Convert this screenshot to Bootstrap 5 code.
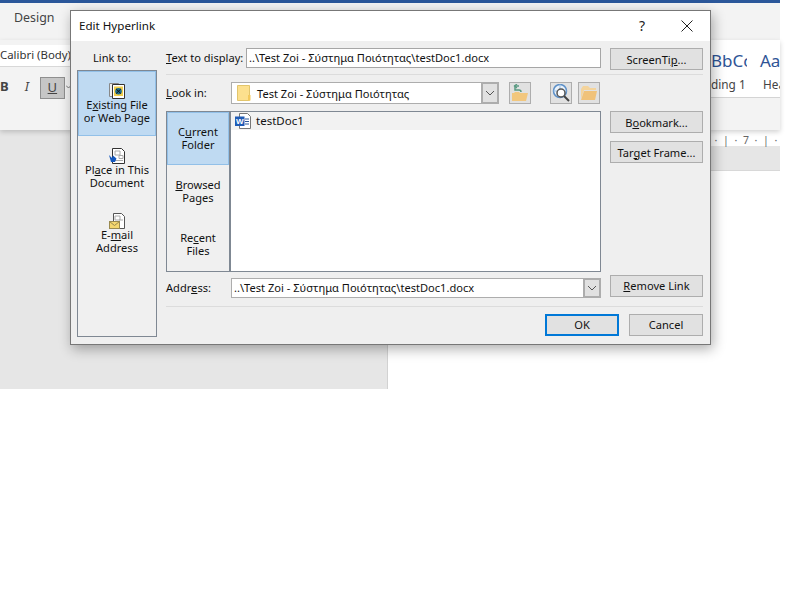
<!DOCTYPE html>
<html lang="en">
<head>
<meta charset="UTF-8">
<title>Edit Hyperlink</title>
<link href="https://cdn.jsdelivr.net/npm/bootstrap@5.3.2/dist/css/bootstrap.min.css" rel="stylesheet">
<style>
html, body { margin: 0; background: #fff; }
body { width: 795px; height: 598px; overflow: hidden; font-family: "Noto Sans", "Open Sans", sans-serif; font-size: 11.1px; color: #111; line-height: 13px; }
.word-win { position: relative; width: 795px; height: 598px; }
.word-top { height: 3px; width: 780px; background: #2b579a; }
.word-tabs { height: 37px; width: 780px; background: #f3f3f3; padding: 8px 0 0 14px; font-size: 12.4px; color: #444; line-height: 14px; }
.word-ribbon { width: 780px; height: 90px; background: #f3f3f3; box-shadow: 0 2px 5px rgba(0,0,0,.18); position: relative; z-index: 1; }
.ribbon-left { width: 70px; overflow: hidden; }
.font-box { height: 22px; margin-top: 5px; background: #fff; padding-top: 3px; white-space: nowrap; font-size: 11.4px; color: #333; border-bottom: 1px solid #d8d8d8; }
.fmt-row { padding-top: 13px; height: 40px; font-size: 13px; color: #444; }
.fmt-i { margin-left: 16px; margin-right: 11px; }
.fmt-u { background: #c6c6c6; border: 1px solid #8f8f8f; width: 25px; height: 22px; margin-top: -3px; text-align: center; line-height: 19px; flex: none; }
.fmt-chev { flex: none; margin: 5px 0 0 1px; }
.ribbon-right { margin-left: auto; width: 69px; background: #fff; height: 58px; border-bottom: 1px solid #d4d4d4; padding-top: 11px; overflow: hidden; white-space: nowrap; }
.style-first { width: 49px; overflow: hidden; flex: none; }
.style-big { font-size: 17px; color: #2f5496; line-height: 20px; }
.style-big-clip { width: 36px; overflow: hidden; }
.style-names { font-size: 11.8px; color: #444; margin-top: 6px; line-height: 14px; }
.word-doc { width: 780px; height: 259px; }
.doc-left { width: 388px; flex: none; background: #e6e6e6; border-right: 1px solid #d2d2d2; }
.doc-right { flex: 1; min-width: 0; background: #fff; }
.ruler { height: 16px; padding: 4px 0 0 323px; font-size: 10.5px; line-height: 12px; color: #666; }
.ruler span { width: 10px; text-align: center; flex: none; }
.ruler-band { height: 25px; background: #e6e6e6; border-bottom: 1px solid #d8d8d8; }

.hl-dialog { position: absolute; left: 70px; top: 10px; width: 641px; height: 335px; background: #efefef; border: 1px solid #777; box-shadow: 2px 4px 12px rgba(0,0,0,.32); z-index: 2; }
.hl-title { height: 30px; background: #fff; padding: 8px 0 0 8px; font-size: 11.6px; line-height: 13px; }
.title-help { position: absolute; top: 6px; left: 568px; font-size: 14px; line-height: 18px; color: #222; }
.title-close { position: absolute; top: 9px; left: 610px; }
.hl-body { padding: 0 7px 0 6px; }
.side-col { width: 80px; margin-right: 9px; }
.side-label { height: 19px; padding: 10px 10px 0 0; box-sizing: content-box; text-align: center; line-height: 13px; }
.side-bar { height: 267px; border: 1px solid #7f8893; background: #f0f0f0; }
.side-item { height: 65px; text-align: center; padding-top: 12px; }
.side-item svg { display: block; margin: 0 auto -1px; }
.side-item.on { background: #bfdaf2; border: 1px solid #92c0e8; padding-top: 11px; }
.side-last { height: auto; padding-top: 12px; }
.main-col { width: 537px; }
.form-row-hl { display: flex; }
.row-text { padding-top: 7px; height: 33px; }
.row-look { padding-top: 7px; height: 36px; }
.row-addr { height: 34px; }
.left-part { width: 435px; display: flex; }
.left-addr { padding-top: 6px; }
.lbl { width: 80px; padding-top: 3px; white-space: nowrap; }
.lbl-look { padding-top: 4px; }
.lbl-addr { width: 65px; }
.hl-input { flex: 1; height: 20px; background: #fff; border: 1px solid #a6a6a6; padding: 2px 0 0 2px; white-space: nowrap; overflow: hidden; }
.hl-btn { display: block; width: 93px; height: 22px; background: #e1e1e1; border: 1px solid #adadad; text-align: center; line-height: 19px; color: #111; padding: 0; font-size: 11.1px; border-radius: 0; }
.hl-btn-next { margin-top: 8px; }
.hl-btn-low { line-height: 18px; }
.right-part { margin-left: 9px; width: 93px; }
.right-addr { padding-top: 3px; }
.hl-sep { height: 1px; background: #dcdcdc; }
.combo { position: relative; width: 268px; height: 22px; background: #fff; border: 1px solid #adadad; padding: 4px 0 0 25px; margin-left: -15px; }
.combo svg.folder { position: absolute; left: 5px; top: 2px; }
.combo-arrow { position: absolute; right: -1px; top: -1px; width: 18px; height: 22px; background: #e1e1e1; border: 2px solid #adadad; display: flex; align-items: center; justify-content: center; }
.combo-addr { margin-left: 0; width: 370px; padding: 2px 0 0 2px; height: 20px; }
.combo-addr .combo-arrow { height: 20px; }
.tool-btn { width: 22px; height: 22px; background: #e1e1e1; border: 1px solid #adadad; display: flex; align-items: center; justify-content: center; }
.tool-first { margin-left: 10px; }
.tool-second { margin-left: 19px; }
.tool-third { margin-left: 6px; }
.browse { width: 435px; height: 161px; border: 1px solid #7f8893; }
.tabs-col { width: 64px; background: #f0f0f0; border-right: 2px solid #7f8893; flex: none; }
.tab-item { height: 53px; text-align: center; padding-top: 13px; }
.tab-item.on { background: #bfdaf2; border: 1px solid #92c0e8; padding-top: 12px; }
.file-list { flex: 1; background: #fff; }
.file-row { height: 18px; background: #f2f2f2; padding: 1px 0 0 4px; display: flex; gap: 5px; font-size: 11.5px; line-height: 16px; }
.file-row svg { flex: none; }
.foot-row { padding-top: 7px; gap: 10px; }
.btn-ok { width: 74px; height: 22px; background: #e1e1e1; border: 2px solid #0078d7; text-align: center; line-height: 16px; padding: 0; font-size: 11.1px; color: #111; border-radius: 0; }
.btn-cancel { width: 74px; }
u { text-underline-offset: 1px; }
</style>
</head>
<body>
<div class="word-win">
  <div class="word-top"></div>
  <div class="word-tabs">Design</div>
  <div class="word-ribbon d-flex">
    <div class="ribbon-left">
      <div class="font-box">Calibri (Body)</div>
      <div class="fmt-row d-flex align-items-start">
        <b>B</b><i class="fmt-i">I</i><div class="fmt-u"><u>U</u></div>
        <svg class="fmt-chev" width="5" height="4" viewBox="0 0 5 4"><path d="M0 .5l2.500 2.500L5 .5" fill="none" stroke="#777"/></svg>
      </div>
    </div>
    <div class="ribbon-right d-flex">
      <div class="style-first">
        <div class="style-big style-big-clip">BbCc</div>
        <div class="style-names">ding 1</div>
      </div>
      <div>
        <div class="style-big">AaI</div>
        <div class="style-names">&nbsp;Hea</div>
      </div>
    </div>
  </div>
  <div class="word-doc d-flex">
    <div class="doc-left"></div>
    <div class="doc-right">
      <div class="ruler d-flex"><span>&middot;</span><span>|</span><span>&middot;</span><span>7</span><span>&middot;</span><span>|</span><span>&middot;</span></div>
      <div class="ruler-band"></div>
    </div>
  </div>

  <div class="hl-dialog">
    <div class="hl-title">Edit Hyperlink</div>
    <div class="title-help">?</div>
    <svg class="title-close" width="12" height="12" viewBox="0 0 12 12"><path d="M.5.5l11 11M11.5.5l-11 11" stroke="#222" fill="none"/></svg>
    <div class="hl-body d-flex">
      <div class="side-col">
        <div class="side-label">Link to:</div>
        <div class="side-bar">
          <div class="side-item on">
            <svg width="16" height="16" viewBox="0 0 16 16"><path d="M.5.500h9v13h-9z" fill="#eee" stroke="#888"/><path d="M3.500 1.500h12v14h-12z" fill="#fff" stroke="#333"/><rect x="5" y="3.500" width="9" height="9.500" fill="#f2cf4a"/><circle cx="9.500" cy="8.200" r="3.300" fill="#1d6f8f"/><path d="M7.200 6l4.600 4.500M11.800 6l-4.600 4.500" stroke="#111"/></svg>
            <div>E<u>x</u>isting File<br>or Web Page</div>
          </div>
          <div class="side-item">
            <svg width="16" height="16" viewBox="0 0 16 16"><path d="M3.500.5h9l3 3v12h-12z" fill="#fff" stroke="#333"/><path d="M6 3h5v4H6zM10 7.500h4v3h-4zM6 12.500h8" fill="none" stroke="#aaa"/><path d="M0 7l3 3 1-2.500 3.500 3L6 14H2z" fill="#1559c0"/></svg>
            <div>Pl<u>a</u>ce in This<br>Document</div>
          </div>
          <div class="side-item side-last">
            <svg width="16" height="16" viewBox="0 0 16 16"><path d="M4.500.5h8l3 3v12h-11z" fill="#fff" stroke="#555"/><path d="M6 3h5v4H6zM10 7h4" fill="none" stroke="#aaa"/><rect x=".5" y="8.500" width="10" height="7" fill="#f5d76e" stroke="#9a8a50"/><path d="M.5 8.500l5 4 5-4" fill="none" stroke="#9a8a50"/></svg>
            <div>E-<u>m</u>ail<br>Address</div>
          </div>
        </div>
      </div>
      <div class="main-col">
        <div class="form-row-hl row-text">
          <div class="left-part"><div class="lbl"><u>T</u>ext to display:</div><div class="hl-input">..\Test Zoi - Σύστημα Ποιότητας\testDoc1.docx</div></div>
          <div class="right-part"><button type="button" class="hl-btn">ScreenTi<u>p</u>...</button></div>
        </div>
        <div class="hl-sep"></div>
        <div class="form-row-hl row-look">
          <div class="left-part">
            <div class="lbl lbl-look"><u>L</u>ook in:</div>
            <div class="combo">
              <svg class="folder" width="14" height="16" viewBox="0 0 14 16"><path d="M.5.500h12v15H.5z" fill="#fce08e" stroke="#e2c56c"/><path d="M11 10h2.500v5.500H11z" fill="#f3c95c"/></svg>
              Test Zoi - Σύστημα Ποιότητας
              <div class="combo-arrow"><svg width="10" height="6" viewBox="0 0 10 6"><path d="M1 1l4 4 4-4" fill="none" stroke="#555"/></svg></div>
            </div>
            <div class="tool-btn tool-first">
              <svg width="18" height="18" viewBox="0 0 18 18"><path d="M1 9h2l1-1h4l1 1h8l-2 8H1z" fill="#f2c77e"/><path d="M8 2H4v4h4a2 2 0 0 1 2 2" fill="none" stroke="#5a9a82" stroke-width="1.500"/><path d="M6 0L3.500 2 6 4" fill="none" stroke="#5a9a82" stroke-width="1.300"/></svg>
            </div>
            <div class="tool-btn tool-second">
              <svg width="18" height="18" viewBox="0 0 18 18"><circle cx="8" cy="7" r="6.500" fill="#e9f2fb" stroke="#5b8fc7" stroke-width="1.500"/><path d="M1.500 7h13M8 .5v13" stroke="#9cc0e4"/><circle cx="9" cy="9" r="4" fill="#fff" stroke="#555" stroke-width="1.500"/><path d="M12 12l5 5" stroke="#444" stroke-width="2"/></svg>
            </div>
            <div class="tool-btn tool-third">
              <svg width="18" height="16" viewBox="0 0 18 16"><path d="M1 4l2-3h5l2 2h6v2H4l-3 9z" fill="#f4d49c"/><path d="M4 6h13l-2 9H1z" fill="#f0c27a"/></svg>
            </div>
          </div>
        </div>
        <div class="form-row-hl">
          <div class="browse d-flex">
            <div class="tabs-col">
              <div class="tab-item on">C<u>u</u>rrent<br>Folder</div>
              <div class="tab-item"><u>B</u>rowsed<br>Pages</div>
              <div class="tab-item">Re<u>c</u>ent<br>Files</div>
            </div>
            <div class="file-list">
              <div class="file-row">
                <svg width="16" height="16" viewBox="0 0 16 16"><path d="M4.500.5h8l3 3v12h-11z" fill="#fff" stroke="#777"/><path d="M10 6h4M10 8.500h4M10 11h4" stroke="#2b579a"/><rect x="0" y="3.500" width="9.500" height="9.500" fill="#1f5bb5"/><text x="4.800" y="11" font-size="8" font-weight="700" text-anchor="middle" fill="#fff" font-family="Liberation Sans, sans-serif">W</text></svg>
                testDoc1
              </div>
            </div>
          </div>
          <div class="right-part">
            <button type="button" class="hl-btn">B<u>o</u>okmark...</button>
            <button type="button" class="hl-btn hl-btn-next">Tar<u>g</u>et Frame...</button>
          </div>
        </div>
        <div class="form-row-hl row-addr">
          <div class="left-part left-addr">
            <div class="lbl lbl-addr">Addr<u>e</u>ss:</div>
            <div class="combo combo-addr">..\Test Zoi - Σύστημα Ποιότητας\testDoc1.docx
              <div class="combo-arrow"><svg width="10" height="6" viewBox="0 0 10 6"><path d="M1 1l4 4 4-4" fill="none" stroke="#555"/></svg></div>
            </div>
          </div>
          <div class="right-part right-addr"><button type="button" class="hl-btn hl-btn-low"><u>R</u>emove Link</button></div>
        </div>
        <div class="hl-sep"></div>
        <div class="d-flex justify-content-end foot-row">
          <button type="button" class="btn-ok">OK</button>
          <button type="button" class="hl-btn hl-btn-low btn-cancel">Cancel</button>
        </div>
      </div>
    </div>
  </div>
</div>
</body>
</html>
